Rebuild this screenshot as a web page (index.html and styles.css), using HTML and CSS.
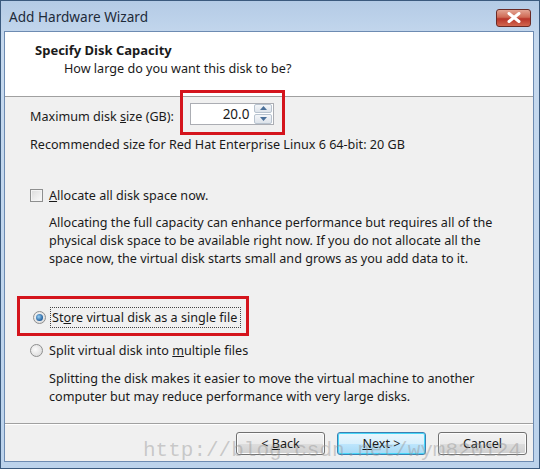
FILE: index.html
```html
<!DOCTYPE html>
<html>
<head>
<meta charset="utf-8">
<link rel="stylesheet" href="styles.css">
</head>
<body>
<div class="window">
  <div class="titlebar">
    <span class="title">Add Hardware Wizard</span>
    <div class="close">
      <svg width="14" height="11" viewBox="0 0 14 11"><path d="M2 1.5 L12 9.5 M12 1.5 L2 9.5" stroke="#fff" stroke-width="3" stroke-linecap="round"/></svg>
    </div>
  </div>
  <div class="client">
    <div class="header">
      <div class="h-title">Specify Disk Capacity</div>
      <div class="h-sub">How large do you want this disk to be?</div>
    </div>
    <div class="content">
      <div class="size-row">
        <span class="lbl">Maximum disk <u>s</u>ize (GB):</span>
        <div class="hl hl-spin">
          <div class="spin">
            <span class="spin-val">20.0</span>
            <div class="spin-btns">
              <div class="sbtn"><svg width="7" height="4" viewBox="0 0 7 4"><path d="M0 4 L3.5 0 L7 4Z" fill="#4a6f99"/></svg></div>
              <div class="sbtn"><svg width="7" height="4" viewBox="0 0 7 4"><path d="M0 0 L3.5 4 L7 0Z" fill="#4a6f99"/></svg></div>
            </div>
          </div>
        </div>
      </div>
      <div class="rec">Recommended size for Red Hat Enterprise Linux 6 64-bit: 20 GB</div>
      <div class="opt check-opt">
        <span class="checkbox"></span>
        <span><u>A</u>llocate all disk space now.</span>
      </div>
      <p class="desc">Allocating the full capacity can enhance performance but requires all of the physical disk space to be available right now. If you do not allocate all the space now, the virtual disk starts small and grows as you add data to it.</p>
      <div class="hl hl-radio">
        <div class="opt">
          <span class="radio on"><span class="dot"></span></span>
          <span class="focus">St<u>o</u>re virtual disk as a single file</span>
        </div>
      </div>
      <div class="opt radio2">
        <span class="radio"></span>
        <span>Split virtual disk into <u>m</u>ultiple files</span>
      </div>
      <p class="desc desc2">Splitting the disk makes it easier to move the virtual machine to another computer but may reduce performance with very large disks.</p>
    </div>
    <div class="footer">
      <button class="btn">&lt; <u>B</u>ack</button>
      <button class="btn default"><u>N</u>ext &gt;</button>
      <button class="btn">Cancel</button>
    </div>
  </div>
  <div class="watermark">http://blog.csdn.net/wym820124</div>
</div>
</body>
</html>
```

FILE: styles.css
```css
html, body {
  margin: 0;
  padding: 0;
  background: #fff;
}
body {
  font-family: "Noto Sans", "DejaVu Sans", sans-serif;
  font-size: 12.6px;
  color: #1a1a1a;
}
.window {
  position: relative;
  width: 540px;
  height: 469px;
  box-sizing: border-box;
  border: 1px solid #3b5a7e;
  background: linear-gradient(#b4cbe6, #c6d9ee 40px, #bcd3ec);
  display: flex;
  flex-direction: column;
}
.titlebar {
  height: 30px;
  display: flex;
  align-items: center;
  padding-left: 8px;
  padding-right: 8px;
  justify-content: space-between;
}
.title {
  font-size: 13.6px;
  color: #1e2b3a;
}
.close {
  width: 35px;
  height: 18px;
  margin-top: 3px;
  box-sizing: border-box;
  border: 1px solid #6b2b26;
  border-radius: 3px;
  background: linear-gradient(#e3a493, #cf6a55 45%, #b8352a 55%, #d2674f);
  display: flex;
  align-items: center;
  justify-content: center;
}
.client {
  flex: 1;
  margin: 0 5px 6px 3px;
  border: 1px solid #6d8bb2;
  background: #f0f0f0;
  display: flex;
  flex-direction: column;
}
.header {
  height: 65px;
  box-sizing: border-box;
  background: #fff;
  border-bottom: 1px solid #a0a0a0;
  padding: 9px 0 0 30px;
}
.h-title {
  font-weight: bold;
  font-size: 13px;
  line-height: 18px;
}
.h-sub {
  padding-left: 29px;
  line-height: 20px;
  font-size: 12.6px;
}
.content {
  flex: 1;
  padding: 0 0 0 25px;
}
.size-row {
  display: flex;
  align-items: flex-start;
  height: 38px;
}
.lbl {
  margin-top: 11px;
  line-height: 18px;
}
.hl {
  border: 3px solid #d4141c;
  box-sizing: border-box;
}
.hl-spin {
  position: relative;
  margin-top: -7px;
  margin-left: 6px;
  width: 105px;
  height: 45px;
  display: flex;
  align-items: center;
  justify-content: center;
  padding-top: 2px;
}
.spin {
  width: 84px;
  height: 22px;
  box-sizing: border-box;
  border: 1px solid #abadb3;
  background: #fff;
  display: flex;
  align-items: center;
}
.spin-val {
  flex: 1;
  text-align: right;
  padding-right: 5px;
  font-size: 13.5px;
}
.spin-btns {
  width: 18px;
  height: 20px;
  display: flex;
  flex-direction: column;
  gap: 1px;
  margin-right: 1px;
}
.sbtn {
  flex: 1;
  box-sizing: border-box;
  border: 1px solid #b8c3cf;
  border-radius: 2px;
  background: linear-gradient(#f4f6f9, #dde3ea);
  display: flex;
  align-items: center;
  justify-content: center;
}
.rec {
  margin-top: 1px;
  line-height: 18px;
}
.opt {
  display: flex;
  align-items: center;
  gap: 6px;
  height: 18px;
}
.check-opt {
  margin-top: 32px;
}
.checkbox {
  width: 13px;
  height: 13px;
  box-sizing: border-box;
  border: 1px solid #8e8f8f;
  background: linear-gradient(135deg, #dcdcdc, #fbfbfb);
  box-shadow: inset 0 0 0 1px #f4f4f4;
}
.desc {
  margin: 10px 0 0 19px;
  line-height: 18px;
  width: 460px;
}
.hl-radio {
  margin: 28px 0 0 -13px;
  width: 232px;
  height: 40px;
  padding: 0 0 0 13px;
  display: flex;
  align-items: center;
}
.hl-radio .opt {
  margin-top: 2px;
}
.radio {
  width: 13px;
  height: 13px;
  box-sizing: border-box;
  border-radius: 50%;
  border: 1px solid #8e8f8f;
  background: radial-gradient(circle at 40% 40%, #fbfbfb, #d4d4d4);
  display: flex;
  align-items: center;
  justify-content: center;
}
.radio .dot {
  width: 7px;
  height: 7px;
  border-radius: 50%;
  background: radial-gradient(circle at 40% 40%, #9ad1f5, #1f5d9c 70%);
}
.focus {
  outline: 1px dotted #444;
  outline-offset: 1px;
  padding-right: 2px;
}
.radio2 {
  margin-top: 5px;
}
.desc2 {
  margin-top: 11px;
}
.footer {
  height: 38px;
  box-sizing: border-box;
  border-top: 1px solid #a0a0a0;
  box-shadow: inset 0 1px 0 #fff;
  display: flex;
  justify-content: flex-end;
  align-items: center;
  gap: 12px;
  padding: 1px 6px 0 0;
}
.btn {
  width: 89px;
  height: 23px;
  font-family: "Noto Sans", "DejaVu Sans", sans-serif;
  font-size: 12.6px;
  color: #1a1a1a;
  border: 1px solid #707070;
  border-radius: 3px;
  background: linear-gradient(#f2f2f2, #ebebeb 50%, #dddddd 51%, #cfcfcf);
  box-shadow: inset 0 0 0 1px #fcfcfc;
  padding: 0;
}
.btn.default {
  border-color: #3c7fb1;
  background: linear-gradient(#eaf6fd, #d9f0fc 50%, #bee6fd 51%, #a7d9f5);
  box-shadow: inset 0 0 0 1px #48d7f8;
}
.watermark {
  position: absolute;
  left: 142px;
  top: 437px;
  line-height: 26px;
  font-family: "Liberation Mono", monospace;
  font-size: 21px;
  color: rgba(150, 150, 150, 0.45);
  pointer-events: none;
  white-space: nowrap;
}
```
